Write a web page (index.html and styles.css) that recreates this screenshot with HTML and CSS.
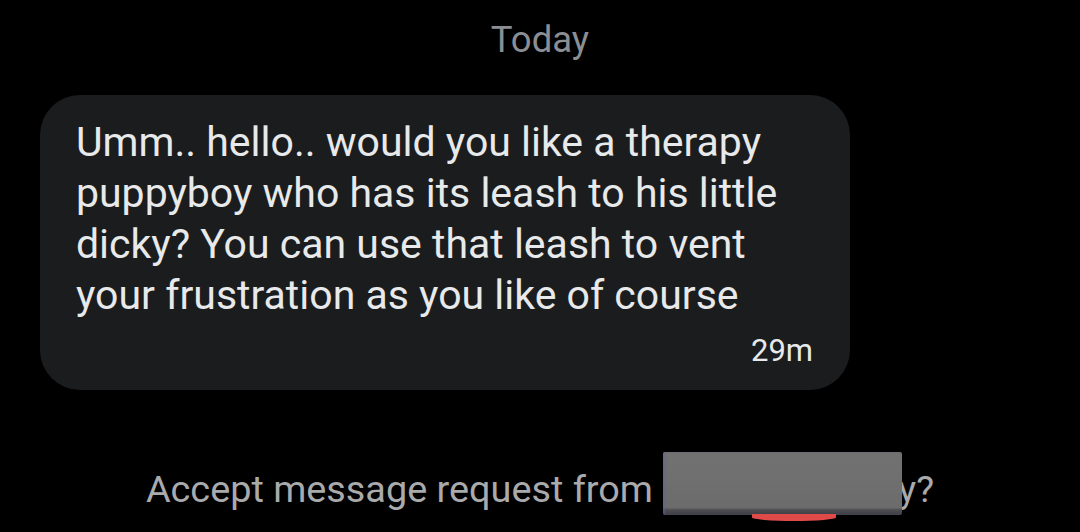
FILE: index.html
```html
<!DOCTYPE html>
<html>
<head>
<meta charset="utf-8">
<link rel="stylesheet" href="styles.css">
</head>
<body>
<div class="screen">
  <div class="day">Today</div>
  <div class="bubble">
    <p class="msg">Umm.. hello.. would you like a therapy puppyboy who has its leash to his little dicky? You can use that leash to vent your frustration as you like of course</p>
    <div class="time">29m</div>
  </div>
  <div class="request">Accept message request from <span class="name"><span class="redact"></span><span class="red"></span></span>y?</div>
</div>
</body>
</html>
```
FILE: styles.css
```css
html, body {
  margin: 0;
  padding: 0;
  background: #000;
}
.screen {
  width: 1080px;
  height: 532px;
  overflow: hidden;
  font-family: Roboto, "Noto Sans", sans-serif;
  display: flex;
  flex-direction: column;
}
.day {
  text-align: center;
  color: #8b8e93;
  font-size: 36.5px;
  line-height: 40px;
  margin-top: 20px;
}
.bubble {
  margin: 35px 0 0 40px;
  width: 810px;
  height: 295px;
  box-sizing: border-box;
  background: #1b1c1e;
  border-radius: 40px;
  padding: 22px 37px 0 36px;
}
.msg {
  margin: 0;
  color: #e7e9ea;
  font-size: 41px;
  line-height: 51px;
}
.time {
  text-align: right;
  color: #e7e9ea;
  font-size: 31px;
  line-height: 32px;
  margin-top: 14px;
}
.request {
  margin-top: 77px;
  text-align: center;
  color: #a9aaab;
  font-size: 37.8px;
  line-height: 44px;
}
.name {
  position: relative;
  display: inline-block;
  width: 236px;
  height: 30px;
  vertical-align: baseline;
}
.redact {
  position: absolute;
  left: 1px;
  top: -20px;
  width: 239px;
  height: 63px;
  background: linear-gradient(#727272, #6c6c6c 88%, #4e4e52 92%, #3d3d44);
  border-radius: 2px;
  box-shadow: inset 2px 0 2px rgba(90,100,160,0.5);
}
.red {
  position: absolute;
  left: 90px;
  top: 42px;
  width: 84px;
  height: 7px;
  background: #e04a48;
  border-radius: 0 0 50% 50%;
}
```
